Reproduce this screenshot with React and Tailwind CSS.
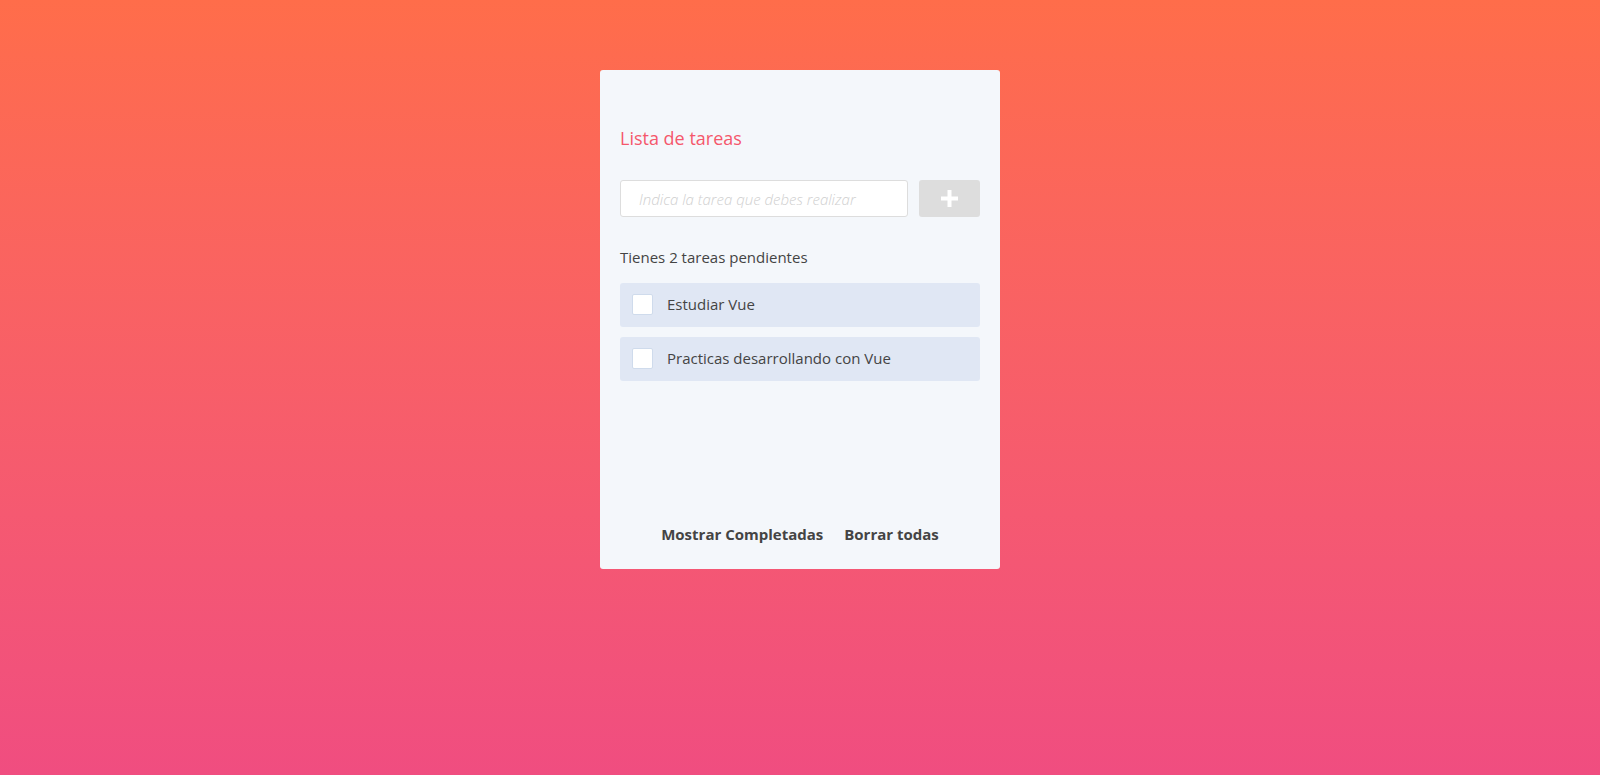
export default function App() {
  const tasks = ["Estudiar Vue", "Practicas desarrollando con Vue"];
  return (
    <div
      className="min-h-screen w-full bg-linear-to-b from-[#ff6d4a] to-[#f04d80] pt-[70px]"
      style={{ fontFamily: '"Open Sans", "Noto Sans", sans-serif' }}
    >
      <div className="mx-auto flex h-[499px] w-[400px] flex-col rounded-[3px] bg-[#f4f7fb] px-5 pb-[24px]">
        <h1 className="mt-[55px] text-[18px] leading-[27px] font-normal text-[#f5576c]">
          Lista de tareas
        </h1>
        <div className="mt-[28px] flex h-[37px] gap-[11px]">
          <input
            type="text"
            placeholder="Indica la tarea que debes realizar"
            className="h-full flex-1 rounded-[3px] border border-[#dddddd] bg-white pl-[18px] pr-4 text-[15px] font-light italic text-[#444] outline-none placeholder:text-[#cfcfcf]"
            style={{ fontFamily: '"Open Sans", "Noto Sans", sans-serif' }}
          />
          <button className="flex h-full w-[61px] items-center justify-center rounded-[3px] bg-[#dddddd]">
            <svg width="17" height="17" viewBox="0 0 17 17">
              <rect x="6.5" y="0" width="4" height="17" fill="#ffffff" />
              <rect x="0" y="6.5" width="17" height="4" fill="#ffffff" />
            </svg>
          </button>
        </div>
        <p className="mt-[29px] text-[15px] leading-[22.5px] text-[#444]">
          Tienes 2 tareas pendientes
        </p>
        <ul className="mt-[14px] flex flex-col gap-[10px]">
          {tasks.map((t) => (
            <li
              key={t}
              className="flex h-[44px] items-center rounded-[3px] bg-[#e0e7f4] pl-[12px]"
            >
              <span className="h-[21px] w-[21px] rounded-[2px] border border-[#cfdbec] bg-white"></span>
              <span className="ml-[14px] text-[15px] leading-[22.5px] text-[#444]">{t}</span>
            </li>
          ))}
        </ul>
        <div className="mt-auto flex justify-center gap-[21px] text-[15px] leading-[22.5px] font-bold text-[#444]">
          <span>Mostrar Completadas</span>
          <span>Borrar todas</span>
        </div>
      </div>
    </div>
  );
}
